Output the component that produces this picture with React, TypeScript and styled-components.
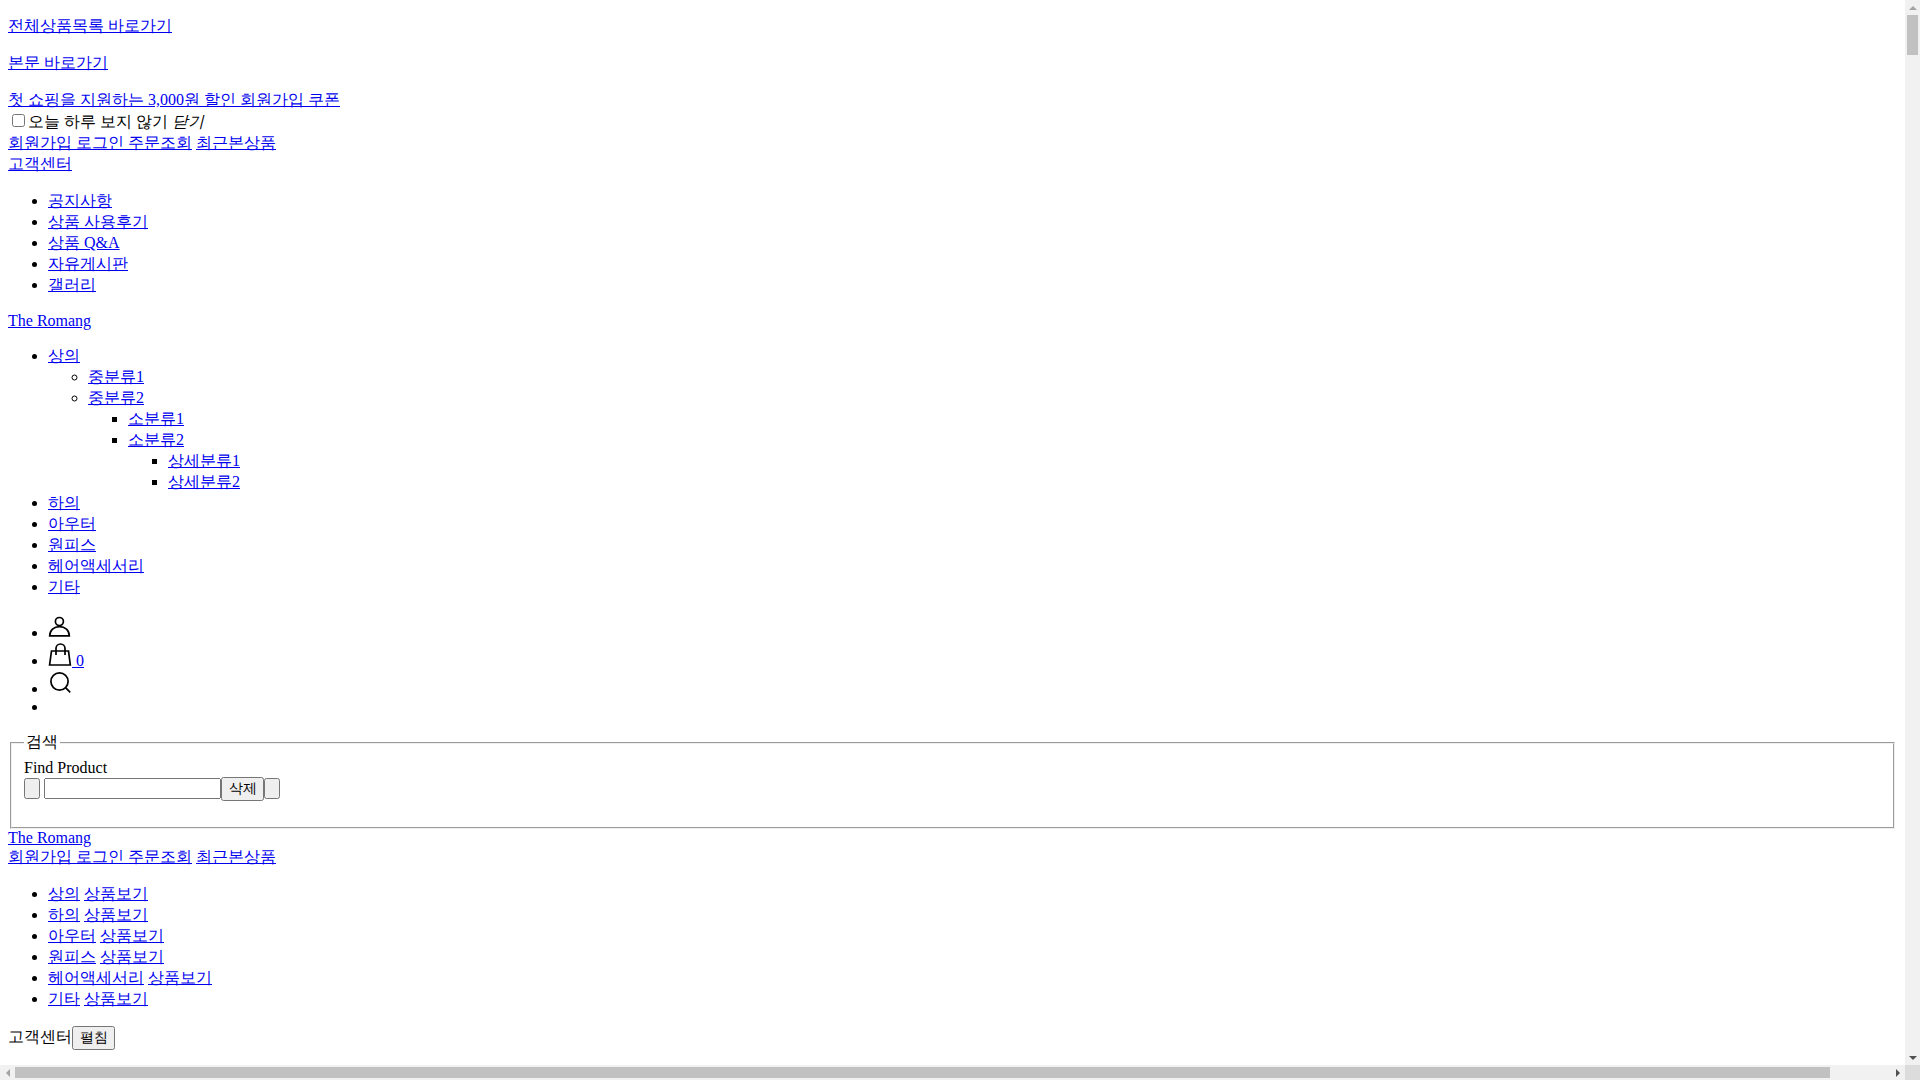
import React from "react";
import styled, { createGlobalStyle } from "styled-components";

const Global = createGlobalStyle`
  html, body {
    margin: 0;
    height: 100%;
    overflow: hidden;
  }
  body {
    font-family: "Liberation Serif", serif;
    font-size: 16px;
    color: #000;
    background: #fff;
  }
`;

const Viewport = styled.div`
  display: grid;
  grid-template-columns: 1fr 15px;
  grid-template-rows: 1fr 15px;
  width: 100vw;
  height: 100vh;
`;
const Page = styled.main`
  overflow: hidden;
  padding: 0 8px;
  min-width: 0;
  min-height: 0;
`;
const VScroll = styled.div`
  display: flex;
  flex-direction: column;
  background: #f1f1f1;
`;
const HScroll = styled.div`
  display: flex;
  background: #f1f1f1;
`;
const Corner = styled.div`
  background: #dcdcdc;
`;
const ArrowCell = styled.div`
  flex: 0 0 15px;
  display: flex;
  align-items: center;
  justify-content: center;
`;
const Track = styled.div`
  flex: 1;
  min-width: 0;
  min-height: 0;
`;
const VThumb = styled.div`
  width: 11px;
  height: 40px;
  margin: 0 2px;
  background: #c1c1c1;
`;
const HThumb = styled.div`
  width: 1815px;
  height: 11px;
  margin: 2px 0;
  background: #c1c1c1;
`;
const ArrowUp = styled.span<{ $dim?: boolean }>`
  border-left: 4px solid transparent;
  border-right: 4px solid transparent;
  border-bottom: 4px solid ${(p) => (p.$dim ? "#a3a3a3" : "#505050")};
`;
const ArrowDown = styled.span<{ $dim?: boolean }>`
  border-left: 4px solid transparent;
  border-right: 4px solid transparent;
  border-top: 4px solid ${(p) => (p.$dim ? "#a3a3a3" : "#505050")};
`;
const ArrowLeft = styled.span<{ $dim?: boolean }>`
  border-top: 4px solid transparent;
  border-bottom: 4px solid transparent;
  border-right: 4px solid ${(p) => (p.$dim ? "#a3a3a3" : "#505050")};
`;
const ArrowRight = styled.span<{ $dim?: boolean }>`
  border-top: 4px solid transparent;
  border-bottom: 4px solid transparent;
  border-left: 4px solid ${(p) => (p.$dim ? "#a3a3a3" : "#505050")};
`;

const Para = styled.p``;
const Block = styled.div``;
const Link = styled.a`
  color: #0000ee;
  text-decoration: underline;
  cursor: pointer;
`;
const List = styled.ul``;
const Item = styled.li``;
const IconItem = styled.li`
  min-height: 18px;
`;
const Icon = styled.svg`
  width: 24px;
  height: 24px;
  fill: none;
  stroke: #000;
  stroke-width: 1.7;
`;
const Fieldset = styled.fieldset`
  margin: 0 2px;
`;
const FieldLabel = styled.label`
  display: block;
`;
const Row = styled.div`
  display: flex;
  align-items: center;
  height: 24px;
  margin-bottom: 16px;
`;
const Input = styled.input`
  box-sizing: border-box;
  width: 177px;
  height: 21px;
  margin-left: 4px;
  font-family: "Liberation Sans", sans-serif;
`;
const Button = styled.button`
  box-sizing: border-box;
  width: 43px;
  height: 24px;
  padding: 0;
  font-family: "Liberation Sans", sans-serif;
  font-size: 14px;
  white-space: nowrap;
`;
const BlankButton = styled.button`
  box-sizing: border-box;
  width: 16px;
  height: 21px;
`;

const cats = ["상의", "하의", "아우터", "원피스", "헤어액세서리", "기타"];

export default function App() {
  return (
    <Viewport>
      <Global />
      <Page>
        <Para><Link>전체상품목록 바로가기</Link></Para>
        <Para><Link>본문 바로가기</Link></Para>
        <Block><Link>첫 쇼핑을 지원하는 3,000원 할인 회원가입 쿠폰</Link></Block>
        <Block>
          <input type="checkbox" />
          <span>오늘 하루 보지 않기</span> <em>닫기</em>
        </Block>
        <Block>
          <Link>회원가입 로그인 주문조회</Link> <Link>최근본상품</Link>
        </Block>
        <Block><Link>고객센터</Link></Block>
        <List>
          <Item><Link>공지사항</Link></Item>
          <Item><Link>상품 사용후기</Link></Item>
          <Item><Link>상품 Q&amp;A</Link></Item>
          <Item><Link>자유게시판</Link></Item>
          <Item><Link>갤러리</Link></Item>
        </List>
        <Para><Link>The Romang</Link></Para>
        <List>
          <Item>
            <Link>상의</Link>
            <List>
              <Item><Link>중분류1</Link></Item>
              <Item>
                <Link>중분류2</Link>
                <List>
                  <Item><Link>소분류1</Link></Item>
                  <Item>
                    <Link>소분류2</Link>
                    <List>
                      <Item><Link>상세분류1</Link></Item>
                      <Item><Link>상세분류2</Link></Item>
                    </List>
                  </Item>
                </List>
              </Item>
            </List>
          </Item>
          <Item><Link>하의</Link></Item>
          <Item><Link>아우터</Link></Item>
          <Item><Link>원피스</Link></Item>
          <Item><Link>헤어액세서리</Link></Item>
          <Item><Link>기타</Link></Item>
        </List>
        <List>
          <IconItem>
            <Link>
              <Icon viewBox="0 0 24 24">
                <circle cx="11.4" cy="7.5" r="4" />
                <path d="M1.7 21.8C1.7 16 6 12.6 11.5 12.6S21.3 16 21.3 21.8Z" />
              </Icon>
            </Link>
          </IconItem>
          <IconItem>
            <Link>
              <Icon viewBox="0 0 24 24">
                <path d="M3.5 9H20.5L22.3 23H1.6Z" />
                <path d="M8 13V6.5a4.5 4.5 0 0 1 9 0V13" />
              </Icon>{" "}
              0
            </Link>
          </IconItem>
          <IconItem>
            <Link>
              <Icon viewBox="0 0 24 24">
                <circle cx="11.5" cy="11.5" r="8.6" />
                <path d="M17.8 17.8L22.2 22.4" />
              </Icon>
            </Link>
          </IconItem>
          <IconItem />
        </List>
        <Fieldset>
          <legend>검색</legend>
          <FieldLabel>Find Product</FieldLabel>
          <Row>
            <BlankButton />
            <Input />
            <Button>삭제</Button>
            <BlankButton />
          </Row>
        </Fieldset>
        <Block><Link>The Romang</Link></Block>
        <Block>
          <Link>회원가입 로그인 주문조회</Link> <Link>최근본상품</Link>
        </Block>
        <List>
          {cats.map((c) => (
            <Item key={c}>
              <Link>{c}</Link> <Link>상품보기</Link>
            </Item>
          ))}
        </List>
        <Block>
          고객센터<Button>펼침</Button>
        </Block>
      </Page>
      <VScroll>
        <ArrowCell><ArrowUp $dim /></ArrowCell>
        <Track><VThumb /></Track>
        <ArrowCell><ArrowDown /></ArrowCell>
      </VScroll>
      <HScroll>
        <ArrowCell><ArrowLeft $dim /></ArrowCell>
        <Track><HThumb /></Track>
        <ArrowCell><ArrowRight /></ArrowCell>
      </HScroll>
      <Corner />
    </Viewport>
  );
}
